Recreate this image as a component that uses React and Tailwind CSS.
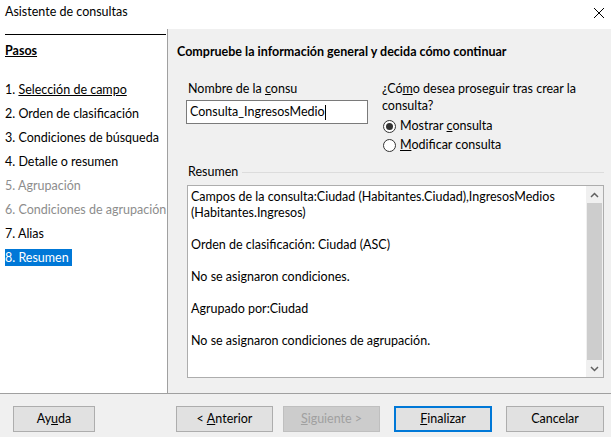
import React from 'react'

const steps = [
  { n: '1.', label: 'Selección de campo', underline: true },
  { n: '2.', label: 'Orden de clasificación' },
  { n: '3.', label: 'Condiciones de búsqueda' },
  { n: '4.', label: 'Detalle o resumen' },
  { n: '5.', label: 'Agrupación', disabled: true },
  { n: '6.', label: 'Condiciones de agrupación', disabled: true },
  { n: '7.', label: 'Alias' },
  { n: '8.', label: 'Resumen', active: true },
]

function Radio({ checked, children }) {
  return (
    <div className="flex items-center h-[19px]">
      <span className="w-[13px] h-[13px] rounded-full border border-[#333] bg-white flex items-center justify-center ml-[1px] mr-[4px]">
        {checked && <span className="w-[7px] h-[7px] rounded-full bg-[#333]" />}
      </span>
      <span>{children}</span>
    </div>
  )
}

function Button({ children, disabled, primary, className = '' }) {
  let cls = 'h-[26px] flex items-center justify-center border '
  if (disabled) cls += 'bg-[#cccccc] border-[#bfbfbf] text-[#a0a0a0]'
  else if (primary) cls += 'bg-[#e1e1e1] border-2 border-[#0078d7] text-black'
  else cls += 'bg-[#e1e1e1] border-[#adadad] text-black'
  return <div className={cls + ' ' + className}>{children}</div>
}

export default function App() {
  return (
    <div className="w-[611px] h-[437px] bg-[#f0f0f0] flex flex-col text-[12.5px] text-black overflow-hidden font-['Lato',sans-serif]">
      <div className="h-[29px] bg-white flex items-center justify-between pl-[5px] pr-[6px] shrink-0">
        <span className="-mt-[4px]">Asistente de consultas</span>
        <svg width="12" height="12" viewBox="0 0 12 12" className="-mt-[4px]">
          <path d="M1 1 L11 11 M11 1 L1 11" stroke="#000" strokeWidth="1" />
        </svg>
      </div>
      <div className="flex h-[365px] border-b border-[#a0a0a0] shrink-0">
        <div className="w-[168px] bg-white border-r border-[#a0a0a0] shrink-0 pl-[5px] pr-[1px]">
          <div className="border-t border-black mt-[5px]" />
          <div className="font-bold underline mt-[7px] leading-[17px]">Pasos</div>
          <div className="mt-[18px] flex flex-col">
            {steps.map((s) => (
              <div key={s.n} className="h-[24px] flex items-center whitespace-nowrap">
                <span
                  className={
                    s.active
                      ? 'bg-[#0078d7] text-white pr-[3px] leading-[17px]'
                      : s.disabled
                      ? 'text-[#8d8d8d] leading-[17px]'
                      : 'leading-[17px]'
                  }
                >
                  {s.n}{' '}
                  {s.underline ? <span className="underline">{s.label}</span> : s.label}
                </span>
              </div>
            ))}
          </div>
        </div>
        <div className="flex-1 pl-[9px] pr-[7px]">
          <div className="font-bold mt-[14px] leading-[17px]">
            Compruebe la información general y decida cómo continuar
          </div>
          <div className="flex mt-[20px]">
            <div className="w-[182px] ml-[9px]">
              <div className="leading-[17px] pl-[2px]">
                Nombre de la <span className="underline">c</span>onsu
              </div>
              <div className="mt-[3px] h-[24px] bg-white border border-[#7a7a7a] flex items-center pl-[3px]">
                Consulta_IngresosMedio
                <span className="w-[1px] h-[15px] bg-black" />
              </div>
            </div>
            <div className="ml-[14px] w-[200px]">
              <div className="leading-[17px]">
                ¿Có<span className="underline">m</span>o desea proseguir tras crear la consulta?
              </div>
              <div className="mt-[3px]">
                <Radio checked>
                  Mostrar <span className="underline">c</span>onsulta
                </Radio>
                <Radio>
                  <span className="underline">M</span>odificar consulta
                </Radio>
              </div>
            </div>
          </div>
          <div className="flex items-center mt-[8px] ml-[11px]">
            <span className="leading-[17px]">Resumen</span>
            <span className="flex-1 border-t border-[#dcdcdc] ml-[4px] mt-[1px]" />
          </div>
          <div className="ml-[10px] mt-[5px] h-[193px] bg-white border border-[#adadad] flex">
            <div className="flex-1 pl-[3px] pt-[3px] leading-[16px]">
              <div>
                Campos de la consulta:Ciudad (Habitantes.Ciudad),IngresosMedios (Habitantes.Ingresos)
              </div>
              <div className="mt-[16px]">Orden de clasificación: Ciudad (ASC)</div>
              <div className="mt-[16px]">No se asignaron condiciones.</div>
              <div className="mt-[16px]">Agrupado por:Ciudad</div>
              <div className="mt-[16px]">No se asignaron condiciones de agrupación.</div>
            </div>
            <div className="w-[17px] bg-[#f0f0f0] flex flex-col shrink-0">
              <div className="h-[17px] flex items-center justify-center">
                <svg width="9" height="6" viewBox="0 0 9 6">
                  <path d="M1 5 L4.5 1.5 L8 5" stroke="#606060" strokeWidth="1.5" fill="none" />
                </svg>
              </div>
              <div className="flex-1 bg-[#cdcdcd] mx-[1px]" />
              <div className="h-[17px] flex items-center justify-center">
                <svg width="9" height="6" viewBox="0 0 9 6">
                  <path d="M1 1 L4.5 4.5 L8 1" stroke="#606060" strokeWidth="1.5" fill="none" />
                </svg>
              </div>
            </div>
          </div>
        </div>
      </div>
      <div className="flex items-start pt-[12px] pl-[13px]">
        <Button className="w-[82px]">
          Ay<span className="underline">u</span>da
        </Button>
        <Button className="w-[97px] ml-[81px]">
          {'< '}
          <span className="underline ml-[3px]">A</span>nterior
        </Button>
        <Button disabled className="w-[97px] ml-[10px]">
          <span className="underline">S</span>iguiente{' >'}
        </Button>
        <Button primary className="w-[98px] ml-[14px]">
          <span className="underline">F</span>inalizar
        </Button>
        <Button className="w-[98px] ml-[14px]">Cancelar</Button>
      </div>
    </div>
  )
}
